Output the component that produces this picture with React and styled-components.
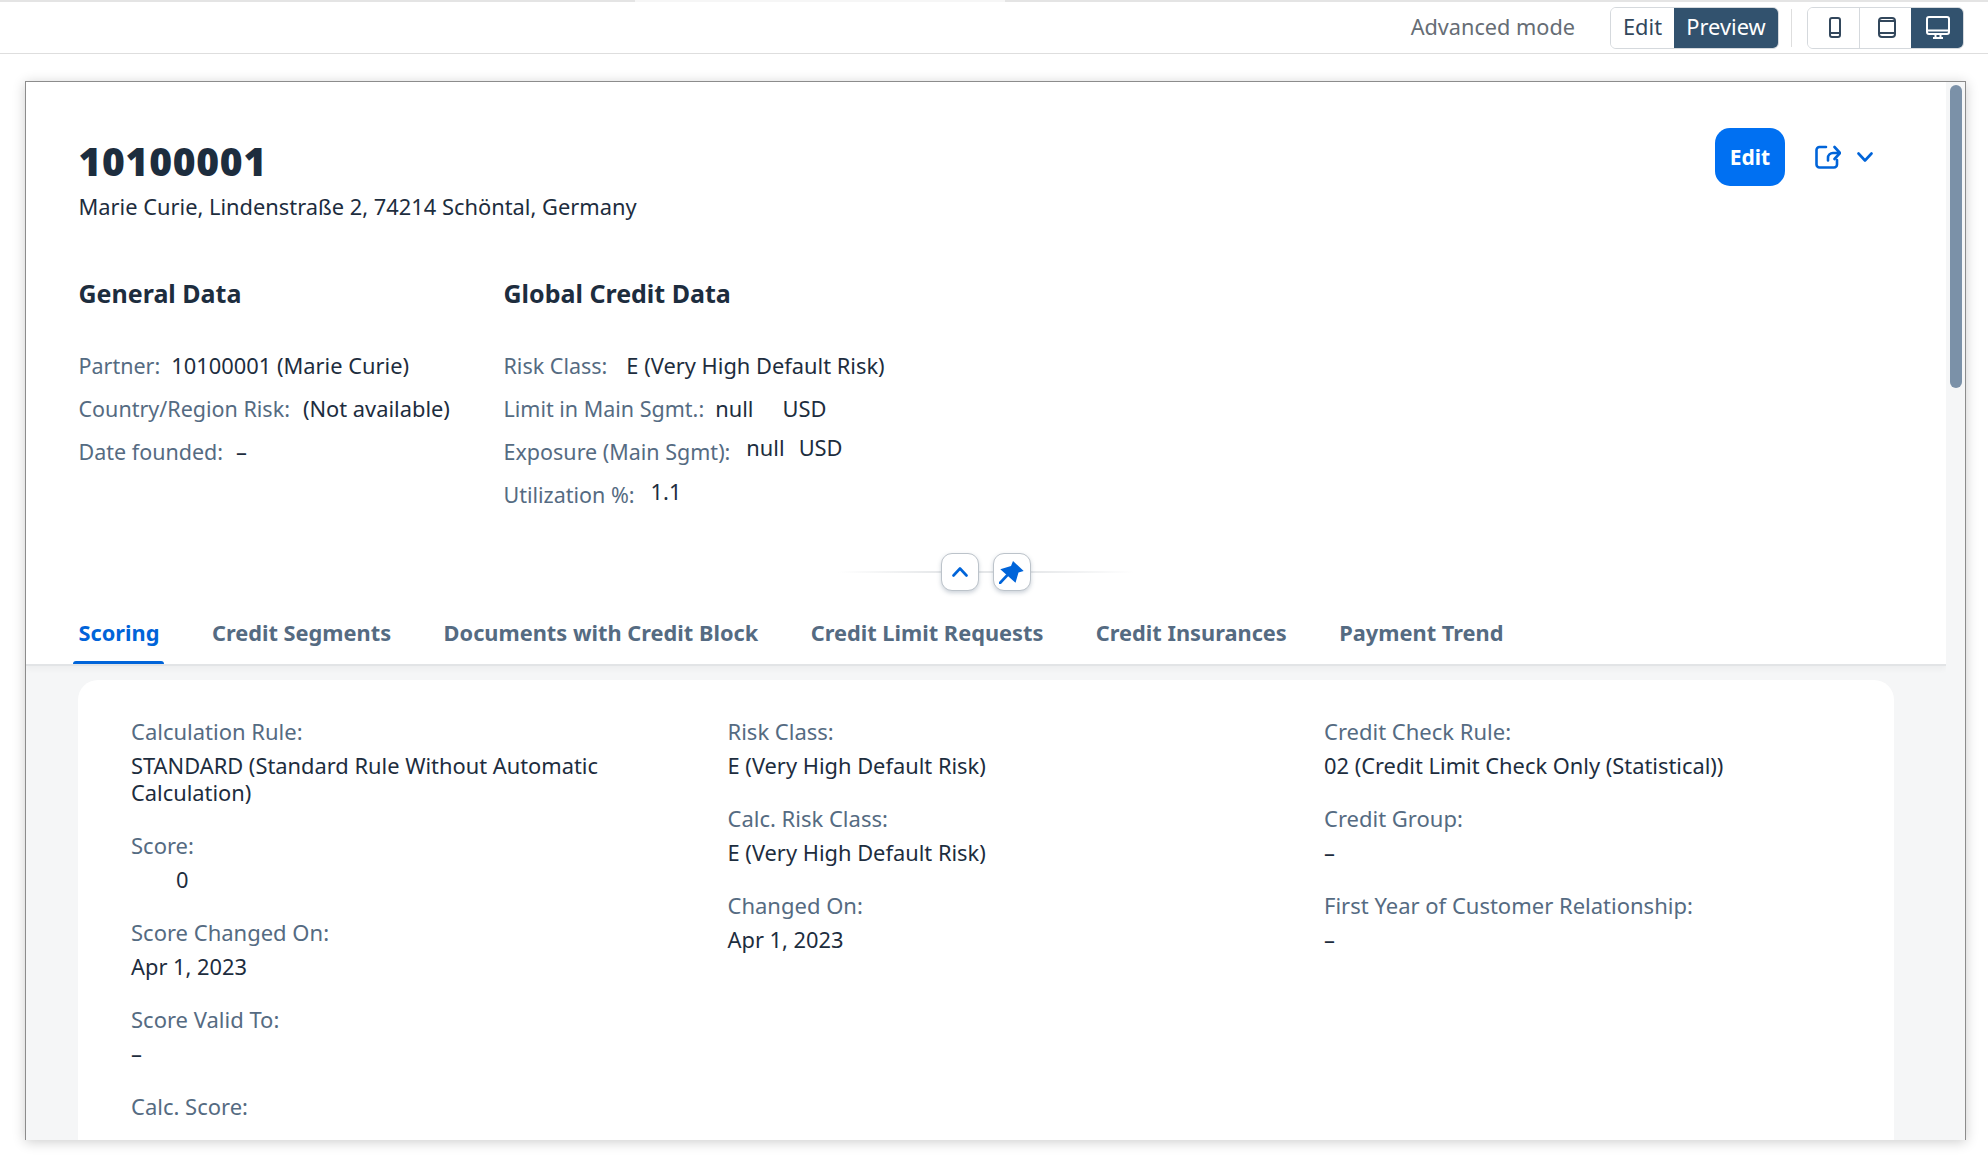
import styled, { createGlobalStyle } from 'styled-components'

const GlobalStyle = createGlobalStyle`
  html, body {
    margin: 0;
    padding: 0;
    background: #fff;
  }
  * {
    box-sizing: border-box;
  }
`

const FONT = `"Noto Sans", "Open Sans", Arial, sans-serif`

const Page = styled.div`
  width: 1988px;
  height: 1160px;
  overflow: hidden;
  font-family: ${FONT};
  font-size: 21.85px;
  color: #1d2d3e;
  display: flex;
  flex-direction: column;
  background: #fff;
`

const TopBar = styled.header`
  height: 54px;
  flex: none;
  display: flex;
  align-items: center;
  padding: 2px 24px 0 0;
  justify-content: flex-end;
  border-bottom: 1px solid #dedede;
  background: linear-gradient(90deg, #e4e4e4 635px, #f6f6f6 635px, #f6f6f6 1005px, #e4e4e4 1005px) top / 100% 2px no-repeat;
`

const ModeLabel = styled.span`
  color: #666d75;
  margin: 0 35px 2px 0;
  font-size: 21.7px;
`

const Segmented = styled.div`
  display: flex;
  height: 42px;
  border: 1px solid #d5d9dd;
  border-radius: 6px;
  overflow: hidden;
`

const SegmentButton = styled.div`
  display: flex;
  align-items: center;
  justify-content: center;
  padding: ${({ $text }) => ($text ? '0 0 2px 0' : '0 0 0 2px')};
  width: ${({ $w }) => $w}px;
  color: ${({ $active }) => ($active ? '#fff' : '#32475c')};
  background: ${({ $active }) => ($active ? '#32526e' : '#fff')};
  border-left: ${({ $divider }) => ($divider ? '1px solid #d5d9dd' : 'none')};
`

const BarDivider = styled.div`
  width: 1px;
  height: 38px;
  background: #dedede;
  margin: 0 15px 0 12px;
`

const Frame = styled.main`
  flex: 1;
  margin: 27px 22px 20px 25px;
  display: flex;
  min-height: 0;
  border: 1px solid #8c8c8c;
  border-bottom: none;
  box-shadow: 0 2px 12px rgba(0, 0, 0, 0.2);
  background: #f5f6f7;
`

const Scroller = styled.div`
  flex: 1;
  min-width: 0;
  overflow: hidden;
`

const ScrollTrack = styled.div`
  width: 19px;
  flex: none;
  padding: 3px 3px 0 4px;
`

const ScrollThumb = styled.div`
  height: 303px;
  background: #7b91a8;
  border-radius: 7px;
`

const ObjectHeader = styled.section`
  background: #fff;
  padding: 0 53px 0 52.5px;
  height: 584px;
  border-bottom: 2px solid #e2e4e6;
  box-shadow: 0 3px 6px rgba(0, 0, 0, 0.04);
  display: flex;
  flex-direction: column;
`

const TitleRow = styled.div`
  height: 166px;
  flex: none;
  display: flex;
  justify-content: space-between;
`

const Title = styled.h1`
  margin: 0;
  font-size: 39px;
  line-height: 48px;
  font-weight: 900;
  letter-spacing: 0.7px;
  color: #1d2d3e;
  padding-top: 55px;
`

const Subtitle = styled.div`
  line-height: 30px;
  margin-top: 7px;
`

const Actions = styled.div`
  display: flex;
  align-items: center;
  height: 58px;
  margin-top: 46px;
  margin-right: 20px;
`

const PrimaryButton = styled.div`
  width: 70px;
  height: 58px;
  padding-bottom: 1px;
  border-radius: 15px;
  background: #0070f2;
  color: #fff;
  font-size: 21px;
  font-weight: 700;
  display: flex;
  align-items: center;
  justify-content: center;
`

const IconWrap = styled.div`
  display: flex;
  margin-left: ${({ $ml }) => $ml}px;
`

const Facets = styled.div`
  display: flex;
`

const Facet = styled.div`
  width: ${({ $w }) => $w}px;
`

const FacetTitle = styled.h2`
  margin: 28px 0 32px;
  font-size: 25px;
  line-height: 34px;
  font-weight: 700;
  height: 36px;
`

const FacetRow = styled.div`
  display: flex;
  align-items: center;
  height: 43px;
`

const FacetLabel = styled.span`
  color: #556b82;
  font-size: 21.5px;
  margin-right: ${({ $gap }) => $gap}px;
  white-space: nowrap;
`

const FacetValue = styled.span`
  white-space: nowrap;
  margin-right: ${({ $gap }) => $gap || 0}px;
  transform: translateY(${({ $lift }) => $lift || 0}px);
`

const Collapse = styled.div`
  display: flex;
  justify-content: center;
  align-items: center;
  gap: 14px;
  width: 296px;
  height: 38px;
  flex: none;
  margin: 37px 0 0 759px;
  background: linear-gradient(90deg, transparent, #e5e7e9 35%, #e5e7e9 65%, transparent) center / 100% 2px no-repeat;
`

const RoundButton = styled.div`
  width: 38px;
  height: 38px;
  border-radius: 11px;
  background: #fff;
  border: 1px solid #bcc3ca;
  box-shadow: 0 2px 4px rgba(85, 107, 130, 0.3);
  display: flex;
  align-items: center;
  justify-content: center;
`

const TabBar = styled.nav`
  display: flex;
  gap: 52.5px;
  margin-top: auto;
  height: 72px;
  align-items: center;
`

const Tab = styled.div`
  position: relative;
  height: 72px;
  padding-top: 8px;
  display: flex;
  align-items: center;
  font-size: 21.77px;
  font-weight: 700;
  color: ${({ $active }) => ($active ? '#0064d9' : '#556b82')};
  &::after {
    content: '';
    display: ${({ $active }) => ($active ? 'block' : 'none')};
    position: absolute;
    left: -6px;
    right: -5px;
    bottom: 0;
    height: 3px;
    background: #0064d9;
    border-radius: 3px 3px 0 0;
  }
`

const Body = styled.section`
  padding: 14px 52px 0;
`

const Panel = styled.div`
  background: #fff;
  border-radius: 20px;
  height: 520px;
  padding: 38px 53px 0;
  display: grid;
  grid-template-columns: repeat(3, 596.5px);
`

const Field = styled.div`
  margin-bottom: 26px;
`

const FieldLabel = styled.div`
  color: #556b82;
  font-size: 22px;
  line-height: 27px;
  margin-bottom: 7px;
`

const FieldValue = styled.div`
  line-height: 27px;
  max-width: 510px;
  padding-left: ${({ $indent }) => $indent || 0}px;
`

const Phone = () => (
  <svg width="12" height="21" viewBox="0 0 12 21" fill="none" stroke="#32475c" strokeWidth="2">
    <rect x="1" y="1" width="10" height="19" rx="2" />
    <path d="M1 16h10" />
  </svg>
)

const Tablet = () => (
  <svg width="18" height="21" viewBox="0 0 18 21" fill="none" stroke="#32475c" strokeWidth="2">
    <rect x="1" y="1" width="16" height="19" rx="3" />
    <path d="M1 4h16M1 16h16" />
  </svg>
)

const Desktop = () => (
  <svg width="24" height="23" viewBox="0 0 24 23" fill="none" stroke="#fff" strokeWidth="2">
    <rect x="1" y="1" width="22" height="17" rx="2" />
    <path d="M1 14.5h22M7 22h10M9.5 18v4M14.5 18v4" />
  </svg>
)

const Share = () => (
  <svg width="26" height="24" viewBox="0 0 26 24" fill="none" stroke="#0064d9" strokeWidth="2.6" strokeLinecap="round" strokeLinejoin="round">
    <path d="M11 2H4.5a3 3 0 0 0-3 3v14.5a3 3 0 0 0 3 3H19a3 3 0 0 0 3-3V15" />
    <path d="M13 15.5V13a5 5 0 0 1 5-5h6.5M19.5 2l5.5 6-5.5 6" />
  </svg>
)

const Chevron = ({ up }) => (
  <svg width="16" height="10" viewBox="0 0 16 10" fill="none" stroke="#0064d9" strokeWidth="2.6" strokeLinecap="round" strokeLinejoin="round">
    <path d={up ? 'M1.5 8.5 8 1.5l6.5 7' : 'M1.5 1.5 8 8.5l6.5-7'} />
  </svg>
)

const Pin = () => (
  <svg width="25" height="23" viewBox="0 0 25 23" fill="#0064d9">
    <path d="M14 0 24.7 10 19.5 11.5 16.5 21.7 1.3 8.3 12 5z" />
    <path d="M8 14.5 1 22" fill="none" stroke="#0064d9" strokeWidth="2.6" strokeLinecap="round" />
  </svg>
)

const generalRows = [
  ['Partner:', '10100001 (Marie Curie)', 11],
  ['Country/Region Risk:', '(Not available)', 13],
  ['Date founded:', '–', 13],
]

const tabs = ['Scoring', 'Credit Segments', 'Documents with Credit Block', 'Credit Limit Requests', 'Credit Insurances', 'Payment Trend']

const columns = [
  [
    ['Calculation Rule:', 'STANDARD (Standard Rule Without Automatic Calculation)'],
    ['Score:', '0', 45],
    ['Score Changed On:', 'Apr 1, 2023'],
    ['Score Valid To:', '–'],
    ['Calc. Score:', ''],
  ],
  [
    ['Risk Class:', 'E (Very High Default Risk)'],
    ['Calc. Risk Class:', 'E (Very High Default Risk)'],
    ['Changed On:', 'Apr 1, 2023'],
  ],
  [
    ['Credit Check Rule:', '02 (Credit Limit Check Only (Statistical))'],
    ['Credit Group:', '–'],
    ['First Year of Customer Relationship:', '–'],
  ],
]

const App = () => (
  <Page>
    <GlobalStyle />
    <TopBar>
      <ModeLabel>Advanced mode</ModeLabel>
      <Segmented>
        <SegmentButton $w={63} $text>Edit</SegmentButton>
        <SegmentButton $w={104} $text $active>Preview</SegmentButton>
      </Segmented>
      <BarDivider />
      <Segmented>
        <SegmentButton $w={51}><Phone /></SegmentButton>
        <SegmentButton $w={52} $divider><Tablet /></SegmentButton>
        <SegmentButton $w={52} $active><Desktop /></SegmentButton>
      </Segmented>
    </TopBar>
    <Frame>
      <Scroller>
        <ObjectHeader>
          <TitleRow>
            <div>
              <Title>10100001</Title>
              <Subtitle>Marie Curie, Lindenstraße 2, 74214 Schöntal, Germany</Subtitle>
            </div>
            <Actions>
              <PrimaryButton>Edit</PrimaryButton>
              <IconWrap $ml={30}><Share /></IconWrap>
              <IconWrap $ml={16}><Chevron /></IconWrap>
            </Actions>
          </TitleRow>
          <Facets>
            <Facet $w={425}>
              <FacetTitle>General Data</FacetTitle>
              {generalRows.map(([label, value, gap]) => (
                <FacetRow key={label}>
                  <FacetLabel $gap={gap}>{label}</FacetLabel>
                  <FacetValue>{value}</FacetValue>
                </FacetRow>
              ))}
            </Facet>
            <Facet $w={600}>
              <FacetTitle>Global Credit Data</FacetTitle>
              <FacetRow>
                <FacetLabel $gap={19}>Risk Class:</FacetLabel>
                <FacetValue>E (Very High Default Risk)</FacetValue>
              </FacetRow>
              <FacetRow>
                <FacetLabel $gap={11}>Limit in Main Sgmt.:</FacetLabel>
                <FacetValue $gap={29}>null</FacetValue>
                <FacetValue>USD</FacetValue>
              </FacetRow>
              <FacetRow>
                <FacetLabel $gap={16}>Exposure (Main Sgmt):</FacetLabel>
                <FacetValue $gap={14} $lift={-4}>null</FacetValue>
                <FacetValue $lift={-4}>USD</FacetValue>
              </FacetRow>
              <FacetRow>
                <FacetLabel $gap={16}>Utilization %:</FacetLabel>
                <FacetValue $lift={-3}>1.1</FacetValue>
              </FacetRow>
            </Facet>
          </Facets>
          <Collapse>
            <RoundButton><Chevron up /></RoundButton>
            <RoundButton><Pin /></RoundButton>
          </Collapse>
          <TabBar>
            {tabs.map((tab, i) => (
              <Tab key={tab} $active={i === 0}>{tab}</Tab>
            ))}
          </TabBar>
        </ObjectHeader>
        <Body>
          <Panel>
            {columns.map((fields, i) => (
              <div key={i}>
                {fields.map(([label, value, indent]) => (
                  <Field key={label}>
                    <FieldLabel>{label}</FieldLabel>
                    {value && <FieldValue $indent={indent}>{value}</FieldValue>}
                  </Field>
                ))}
              </div>
            ))}
          </Panel>
        </Body>
      </Scroller>
      <ScrollTrack>
        <ScrollThumb />
      </ScrollTrack>
    </Frame>
  </Page>
)

export default App
